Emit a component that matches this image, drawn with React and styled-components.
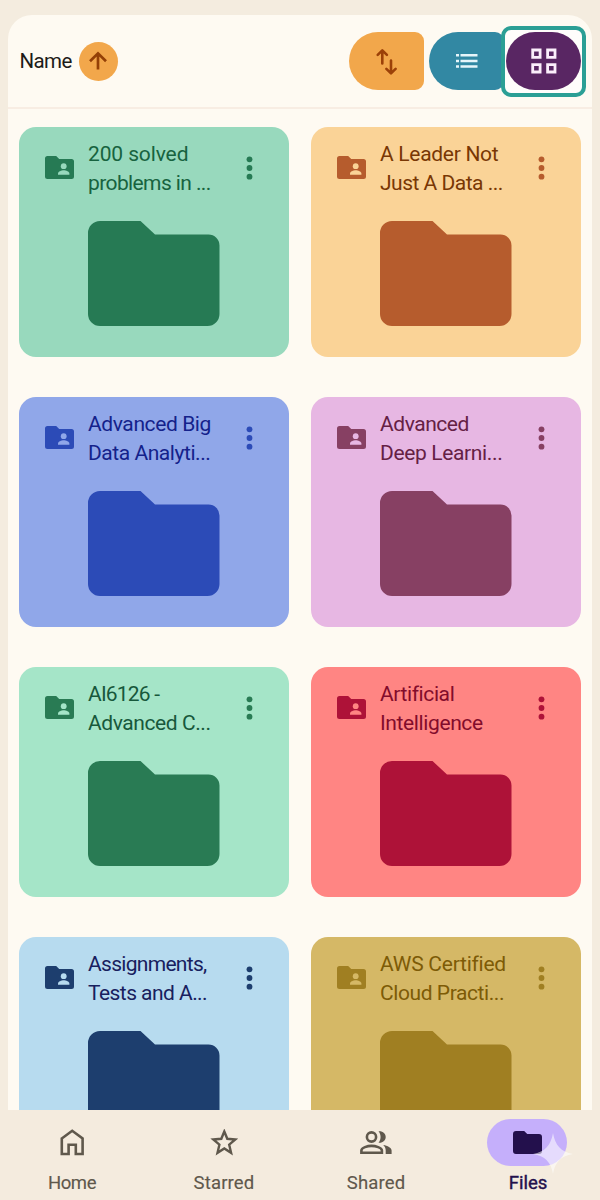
import React from "react";
import styled, { createGlobalStyle } from "styled-components";

const GlobalStyle = createGlobalStyle`
  * {
    box-sizing: border-box;
  }

  body {
    margin: 0;
    background: #f4ecdf;
    font-family: Roboto, "Liberation Sans", sans-serif;
  }
`;

const Screen = styled.div`
  width: 600px;
  height: 1200px;
  padding-top: 15px;
  display: flex;
  flex-direction: column;
  overflow: hidden;
  background: #f4ecdf;
`;

const Panel = styled.main`
  flex: 1;
  min-height: 0;
  margin: 0 8px;
  border-radius: 24px 24px 0 0;
  background: #fefaf2;
  overflow: hidden;
`;

const Toolbar = styled.header`
  display: flex;
  align-items: center;
  height: 94px;
  padding: 0 6px 0 11.5px;
  border-bottom: 2px solid #f8ede3;
`;

const SortLabel = styled.span`
  width: 59px;
  font-size: 20.5px;
  letter-spacing: -0.6px;
  white-space: nowrap;
  color: #1d1b18;
`;

const Round = styled.button`
  display: flex;
  align-items: center;
  justify-content: center;
  width: 39px;
  height: 39px;
  padding: 0;
  border: 0;
  border-radius: 50%;
  background: #f2a74b;
`;

const Actions = styled.div`
  display: flex;
  align-items: center;
  margin-left: auto;
`;

const Action = styled.button`
  display: flex;
  align-items: center;
  justify-content: center;
  width: 75px;
  height: 58px;
  padding: 0;
  border: 0;
  border-radius: ${p => (p.$pill ? "29px" : "29px 9px 9px 29px")};
  background: ${p => p.$color};
  margin-right: ${p => p.$gap || 0}px;
`;

const FocusRing = styled.div`
  position: relative;
  display: flex;
  align-items: center;
  justify-content: center;
  width: 85px;
  height: 71px;
  border: 4px solid #2b9f95;
  border-radius: 10px;
  background: #fffdfb;
`;

const Grid = styled.div`
  display: grid;
  grid-template-columns: 270px 270px;
  grid-auto-rows: 229.5px;
  gap: 40.5px 22px;
  padding: 18.4px 11px 0;
`;

const Card = styled.article`
  border-radius: 17px;
  background: ${p => p.$bg};
  color: ${p => p.$fill};
`;

const CardHead = styled.div`
  display: grid;
  grid-template-columns: 43px 1fr 12px;
  align-items: center;
  height: 81px;
  padding: 0 34px 0 26px;
`;

const Title = styled.h2`
  margin: 2px 0 0;
  font-size: 21px;
  font-weight: 400;
  line-height: 29px;
  color: ${p => p.$color};
`;

const Line = styled.span`
  display: block;
  white-space: nowrap;
  letter-spacing: ${p => p.$spacing}px;
`;

const BigFolder = styled.svg`
  display: block;
  margin: 12.6px 0 0 69px;
`;

const Nav = styled.nav`
  display: grid;
  grid-template-columns: repeat(4, 152px);
  height: 90px;
  margin-left: -4px;
  padding-top: 9px;
  background: #f4ebde;
`;

const NavItem = styled.a`
  display: flex;
  flex-direction: column;
  align-items: center;
  font-size: 18.5px;
  line-height: 24px;
  letter-spacing: ${p => p.$spacing || 0}px;
  -webkit-text-stroke: ${p => (p.$active ? "0.4px" : "0.15px")} currentColor;
  color: ${p => (p.$active ? "#23104c" : "#5f584c")};
`;

const NavIcon = styled.span`
  position: relative;
  display: flex;
  align-items: center;
  justify-content: center;
  width: 80px;
  height: 47px;
  margin: 0 ${p => (p.$active ? 2 : 0)}px 5px 0;
  border-radius: 24px;
  background: ${p => (p.$active ? "#c5affb" : "transparent")};
`;

const Sparkle = styled.svg`
  position: absolute;
  left: 45px;
  top: 13.5px;
`;

const FOLDER =
  "M12 0H52.500L67 13.500H120.500A11 11 0 0 1 131.500 24.500V93A12 12 0 0 1 119.500 105H12A12 12 0 0 1 0 93V12A12 12 0 0 1 12 0Z";

const SharedFolderIcon = ({ bg }) => (
  <svg width="29" height="23" viewBox="0 0 29 23">
    <path
      fill="currentColor"
      d="M2.500 0H11.200L14.200 3H26.500Q29 3 29 5.500V20.500Q29 23 26.500 23H2.500Q0 23 0 20.500V2.500Q0 0 2.500 0Z"
    />
    <circle cx="18.700" cy="10.200" r="2.900" fill={bg} />
    <path fill={bg} d="M13 18.800V17.700C13 15.500 16.400 14.300 18.700 14.300S24.400 15.500 24.400 17.700V18.800Z" />
  </svg>
);

const MoreIcon = () => (
  <svg width="12" height="26" viewBox="0 0 12 26" fill="currentColor">
    <circle cx="6.500" cy="4.300" r="2.900" />
    <circle cx="6.500" cy="13" r="2.900" />
    <circle cx="6.500" cy="21.700" r="2.900" />
  </svg>
);

const UpIcon = () => (
  <svg width="20" height="20" viewBox="0 0 20 20" fill="none" stroke="#944006" strokeWidth="2.700">
    <path d="M10 18.500V3M2 10.300L10 2.300L18 10.300" />
  </svg>
);

const SortIcon = () => (
  <svg
    width="24"
    height="28"
    viewBox="0 0 24 28"
    fill="none"
    stroke="#9c4108"
    strokeWidth="2.600"
    strokeLinecap="round"
    strokeLinejoin="round"
  >
    <path d="M8.300 16.500V4M3.700 7.900L8.300 3.300L12.900 7.900" />
    <path d="M17 13.500V26M12.400 21.800L17 26.400L21.600 21.800" />
  </svg>
);

const ListIcon = () => (
  <svg width="22" height="14" viewBox="0 0 22 14" fill="#e6f5fa">
    <path d="M0 0H3V2.600H0ZM4.500 0H21.500V2.600H4.500ZM0 5.700H3V8.300H0ZM4.500 5.700H21.500V8.300H4.500ZM0 11.200H3V13.800H0ZM4.500 11.200H21.500V13.800H4.500Z" />
  </svg>
);

const GridIcon = () => (
  <svg width="26" height="26" viewBox="0 0 26 26" fill="none" stroke="#fbeefb" strokeWidth="2.800">
    <path d="M1.700 2H9.100V9.300H1.700ZM16.600 2H24V9.300H16.600ZM1.700 16.700H9.100V24H1.700ZM16.600 16.700H24V24H16.600Z" />
  </svg>
);

const HomeIcon = () => (
  <svg width="24" height="27" viewBox="0 0 24 27" fill="none" stroke="currentColor" strokeWidth="2.600">
    <path d="M1.800 9.500L12.200 1.800L22.600 9.500V25H15.800V15.800H8.600V25H1.800Z" />
  </svg>
);

const StarIcon = () => (
  <svg width="28" height="28" viewBox="0 0 28 28" fill="none" stroke="currentColor" strokeWidth="2.400">
    <path d="M14.300 2.500L17.300 9.800L25.300 10.500L19.200 15.700L21.100 23.800L14.300 19.500L7.500 23.800L9.400 15.700L3.300 10.500L11.300 9.800Z" />
  </svg>
);

const PeopleIcon = () => (
  <svg width="32" height="24" viewBox="0 0 32 24">
    <circle cx="11.500" cy="6" r="4.600" fill="none" stroke="currentColor" strokeWidth="2.600" />
    <path
      d="M1.400 21.700V19.500C1.400 16.700 7.500 14.900 11.500 14.900S21.900 16.700 21.900 19.500V21.700Z"
      fill="none"
      stroke="currentColor"
      strokeWidth="2.600"
    />
    <path
      d="M18.500 0.300C22.500-0.300 25.700 2.500 25.700 6S22.500 12.300 18.500 11.700C21.300 8.500 21.300 3.500 18.500 0.300ZM23.200 13.900C27.500 14.600 31.600 16.500 31.600 19.600V23H25.700V19.500C25.700 17.200 25 15.400 23.200 13.900Z"
      fill="currentColor"
    />
  </svg>
);

const FilesIcon = () => (
  <svg width="29" height="23" viewBox="0 0 29 23">
    <path
      fill="#23104c"
      d="M3 0H11.200L14.200 3H26Q29 3 29 6V20Q29 23 26 23H3Q0 23 0 20V3Q0 0 3 0Z"
    />
  </svg>
);

const folders = [
  { lines: [["200 solved", -0.12], ["problems in ...", -0.6]], bg: "#98d9bd", fill: "#267a54", text: "#17633f" },
  { lines: [["A Leader Not", -0.3], ["Just A Data ...", -0.5]], bg: "#fad397", fill: "#b65c2d", text: "#793704" },
  { lines: [["Advanced Big", -0.4], ["Data Analyti...", -0.45]], bg: "#90a7e9", fill: "#2c4bb7", text: "#14228b" },
  { lines: [["Advanced", -0.45], ["Deep Learni...", -0.36]], bg: "#e7b7e3", fill: "#874063", text: "#652044" },
  { lines: [["AI6126 -", -0.8], ["Advanced C...", -0.42]], bg: "#a5e5c8", fill: "#297b54", text: "#17583b" },
  { lines: [["Artificial", -0.4], ["Intelligence", -0.38]], bg: "#ff8583", fill: "#ae1238", text: "#830c2b" },
  { lines: [["Assignments,", -0.7], ["Tests and A...", -0.55]], bg: "#b7dbef", fill: "#1d3e6e", text: "#17205e" },
  { lines: [["AWS Certified", -0.24], ["Cloud Practi...", -0.42]], bg: "#d5b866", fill: "#a07f22", text: "#7d5b06" }
];

const tabs = [
  { name: "Home", icon: <HomeIcon />, spacing: -0.4 },
  { name: "Starred", icon: <StarIcon />, spacing: 0.15 },
  { name: "Shared", icon: <PeopleIcon />, spacing: 0.15 },
  { name: "Files", icon: <FilesIcon />, active: true }
];

const FolderCard = ({ folder }) => (
  <Card $bg={folder.bg} $fill={folder.fill}>
    <CardHead>
      <SharedFolderIcon bg={folder.bg} />
      <Title $color={folder.text}>
        {folder.lines.map(([text, spacing]) => (
          <Line key={text} $spacing={spacing}>
            {text}
          </Line>
        ))}
      </Title>
      <MoreIcon />
    </CardHead>
    <BigFolder width="132" height="105" viewBox="0 0 132 105">
      <path d={FOLDER} fill="currentColor" />
    </BigFolder>
  </Card>
);

const App = () => (
  <Screen>
    <GlobalStyle />
    <Panel>
      <Toolbar>
        <SortLabel>Name</SortLabel>
        <Round>
          <UpIcon />
        </Round>
        <Actions>
          <Action $color="#f2a74b" $gap={5.5}>
            <SortIcon />
          </Action>
          <Action $color="#3288a3" $gap={-3}>
            <ListIcon />
          </Action>
          <FocusRing>
            <Action $color="#592663" $pill>
              <GridIcon />
            </Action>
          </FocusRing>
        </Actions>
      </Toolbar>
      <Grid>
        {folders.map(folder => (
          <FolderCard key={folder.lines[0][0] + folder.lines[1][0]} folder={folder} />
        ))}
      </Grid>
    </Panel>
    <Nav>
      {tabs.map(tab => (
        <NavItem key={tab.name} $active={tab.active} $spacing={tab.spacing}>
          <NavIcon $active={tab.active}>
            {tab.icon}
            {tab.active && (
              <Sparkle width="42" height="42" viewBox="0 0 42 42">
                <path
                  d="M21 0C23 12 29 19 41 21C29 23 23 29 21 41C19 29 13 23 1 21C13 19 19 12 21 0Z"
                  fill="#fff"
                  fillOpacity="0.55"
                />
              </Sparkle>
            )}
          </NavIcon>
          {tab.name}
        </NavItem>
      ))}
    </Nav>
  </Screen>
);

export default App;
